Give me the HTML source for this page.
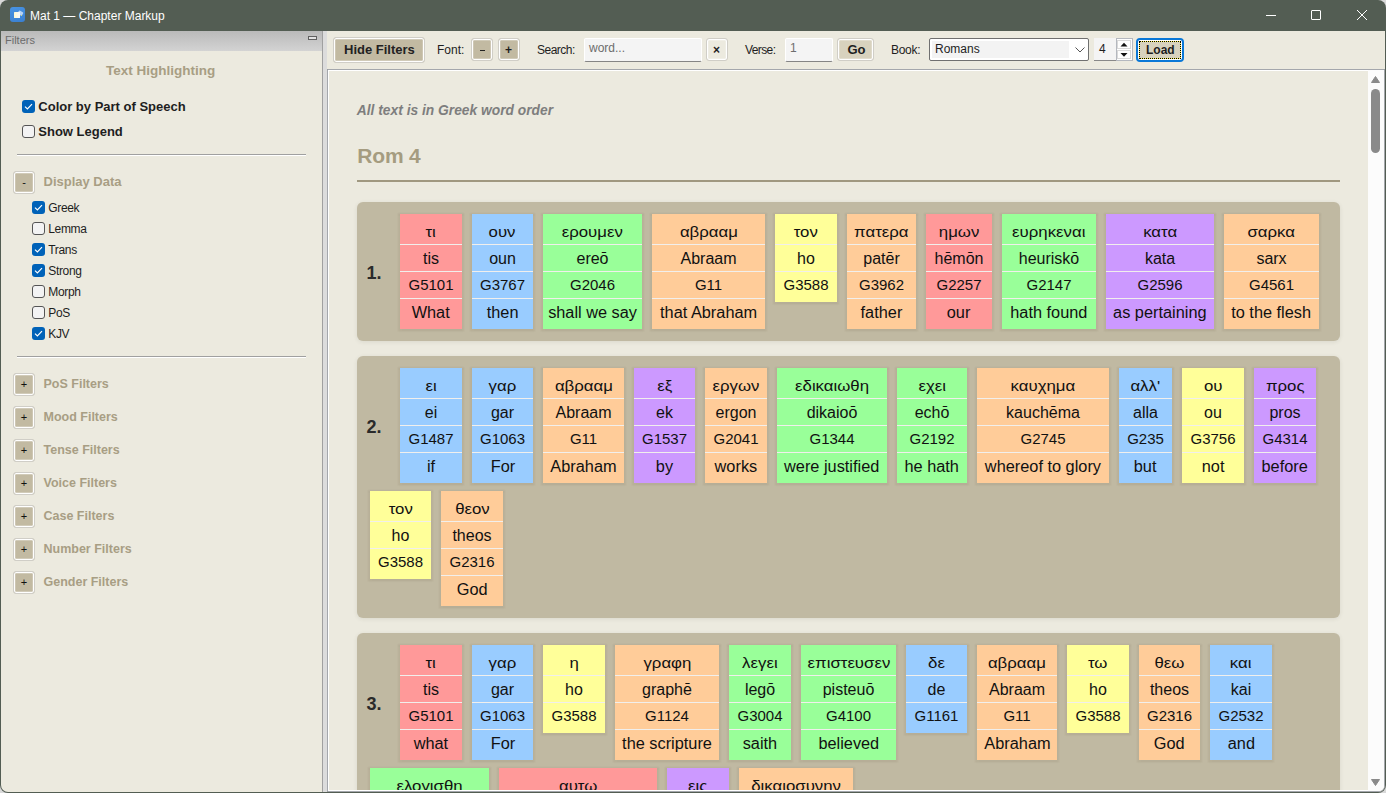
<!DOCTYPE html>
<html><head><meta charset="utf-8"><title>Mat 1 — Chapter Markup</title>
<style>
*{box-sizing:border-box;margin:0;padding:0}
html,body{width:1386px;height:793px;overflow:hidden;background:#d9d9d9;font-family:"Liberation Sans",sans-serif;color:#1e1e1e}
.abs{position:absolute}
#win{position:absolute;left:0;top:0;width:1386px;height:793px;background:#535d53;border-radius:8px 8px 8px 8px;overflow:hidden}
#title{position:absolute;left:30px;top:8px;font-size:12px;color:#fff;line-height:15px;white-space:nowrap}
#appicon{position:absolute;left:9.5px;top:7.3px;width:15.2px;height:15.2px;border-radius:3px;background:linear-gradient(160deg,#4893e4,#3a7fd0)}
#appicon i{position:absolute;left:4.3px;top:4.6px;width:6.2px;height:5.8px;background:linear-gradient(90deg,#fff8d0,#f4f8ff);border-radius:.5px}
#appicon b{position:absolute;left:8.5px;top:3.6px;width:4.5px;height:4px;background:rgba(225,238,255,.75);border-radius:1px;transform:rotate(30deg)}
#appicon u{position:absolute;left:11.3px;top:7.4px;width:1.6px;height:1.6px;background:#e8e060;border-radius:1px}
.wc{position:absolute;top:0;height:31px}
/* left panel */
#left{position:absolute;left:1px;top:31px;width:321px;height:761px;background:#eceadf;border-bottom-left-radius:7px;overflow:hidden}
#fhdr{position:absolute;left:0;top:0;width:321px;height:20px;background:linear-gradient(#bababa,#d3d3d3)}
#fhdr span{position:absolute;left:4px;top:3px;font-size:11px;color:#6c6c6c;line-height:13px}
#fmin{position:absolute;left:307px;top:5px;width:9px;height:4px;border:1px solid #606060;background:#e2e2e2}
#split{position:absolute;left:322px;top:31px;width:5px;height:761px;background:#dcdcdc;border-left:1px solid #a0a0a0}
.lbl{position:absolute;white-space:nowrap;line-height:15px}
.hd{font-weight:bold;color:#a89e84;font-size:13px}
.cb{position:absolute;width:13px;height:13px;border-radius:3px}
.cb.on{background:#0062b8}
.cb.off{background:#f3f3f3;border:1px solid #555}
.cb.on svg{position:absolute;left:2px;top:3px}
.sep{position:absolute;left:16px;width:290px;height:2px;border-top:1px solid #a0a0a0;border-bottom:1px solid #fff}
.tg{position:absolute;left:12px;width:22px;height:23px;border-radius:3px;background:#c2baa2;border:1px solid #d0cec7;box-shadow:inset 0 0 0 1.2px #fff}
.tg span{position:absolute;left:0;right:0;top:4px;text-align:center;font-size:11px;line-height:13px;color:#111}
/* toolbar */
#tool{position:absolute;left:327px;top:31px;width:1058px;height:38px;background:#eceadf}
.btn{position:absolute;border-radius:3px;border:1px solid #d0cec7;box-shadow:inset 0 0 0 1.2px #fff;background:#c2baa2}
.btn span{position:absolute;left:0;right:0;text-align:center;white-space:nowrap}
.inp{position:absolute;background:#f4f4f4;border:1px solid #fff;border-bottom:1px solid #858585;border-radius:2px}
/* content */
#content{position:absolute;left:327px;top:69px;width:1058px;height:723px;background:#eceadf;border:1px solid #a4a7ac;box-shadow:inset 1px 1px 0 #fff,inset -1px -1px 0 #fff;border-bottom-right-radius:6px}
#sb{position:absolute;left:1368px;top:70px;width:16px;height:721px;background:#fcfcfc;border-bottom-right-radius:5px}
.verse{position:absolute;left:357px;width:983px;background:#c0b9a2;border-radius:6px;box-shadow:0 1px 4px rgba(60,60,40,.10)}
.vnum{position:absolute;left:366.5px;font-weight:bold;font-size:18px;line-height:18px;margin-top:-9px;color:#2a2a2a}
.card{position:absolute;padding-top:4px;box-shadow:0 0.5px 1.5px 2px rgba(60,50,30,.08)}
.card .r{height:27px;border-top:1px solid #f1efec;text-align:center;font-size:15px;line-height:26px;white-space:nowrap;color:#111}
.card .r.f{height:26px;border-top:0}
.card .r span{display:inline-block}
.card .k0 span{transform:translateY(1px) scaleX(1.12)}
.card .k1 span{font-size:16px;transform:translateY(1px)}
.card .k3 span{font-size:16px;transform:translateY(1px) scaleX(1.02)}
</style></head>
<body>
<div id="win"></div>
<div id="appicon"><b></b><i></i><u></u></div>
<div class="lbl " style="left:30px;top:9.34px;font-size:12px;line-height:15px;color:#fff">Mat 1 — Chapter Markup</div>
<div class="abs" style="left:1266px;top:15px;width:10px;height:1px;background:#fff"></div>
<div class="abs" style="left:1311px;top:10px;width:10px;height:10px;border:1px solid #fff;border-radius:1px"></div>
<svg class="abs" style="left:1356px;top:9px" width="12" height="12" viewBox="0 0 12 12"><path d="M1 1 L11 11 M11 1 L1 11" stroke="#fff" stroke-width="1"/></svg>
<div id="left"><div id="fhdr"><span>Filters</span><div id="fmin"></div></div></div>
<div id="split"></div>
<div class="lbl hd" style="left:106px;top:62.42px;font-size:13.5px;line-height:17px;">Text Highlighting</div>
<div class="cb on" style="left:22px;top:100px"><svg width="9" height="7" viewBox="0 0 9 7"><path d="M1 3.6 L3.4 6 L8 1.2" fill="none" stroke="#fff" stroke-width="1.2"/></svg></div>
<div class="lbl " style="left:38.3px;top:98.80px;font-size:13px;line-height:16px;font-weight:bold;color:#1e1e1e">Color by Part of Speech</div>
<div class="cb off" style="left:22px;top:125px"></div>
<div class="lbl " style="left:38.3px;top:124.10px;font-size:13px;line-height:16px;font-weight:bold;color:#1e1e1e">Show Legend</div>
<div class="sep" style="top:154px;left:17px;width:289px"></div>
<div class="tg" style="top:171px;left:13px"><span>-</span></div>
<div class="lbl hd" style="left:43.5px;top:174.20px;font-size:13px;line-height:16px;">Display Data</div>
<div class="cb on" style="left:32px;top:201px"><svg width="9" height="7" viewBox="0 0 9 7"><path d="M1 3.6 L3.4 6 L8 1.2" fill="none" stroke="#fff" stroke-width="1.2"/></svg></div>
<div class="lbl " style="left:48.3px;top:201.34px;font-size:12px;line-height:15px;color:#1e1e1e;letter-spacing:-0.35px">Greek</div>
<div class="cb off" style="left:32px;top:222px"></div>
<div class="lbl " style="left:48.3px;top:222.34px;font-size:12px;line-height:15px;color:#1e1e1e;letter-spacing:-0.35px">Lemma</div>
<div class="cb on" style="left:32px;top:243px"><svg width="9" height="7" viewBox="0 0 9 7"><path d="M1 3.6 L3.4 6 L8 1.2" fill="none" stroke="#fff" stroke-width="1.2"/></svg></div>
<div class="lbl " style="left:48.3px;top:243.34px;font-size:12px;line-height:15px;color:#1e1e1e;letter-spacing:-0.35px">Trans</div>
<div class="cb on" style="left:32px;top:264px"><svg width="9" height="7" viewBox="0 0 9 7"><path d="M1 3.6 L3.4 6 L8 1.2" fill="none" stroke="#fff" stroke-width="1.2"/></svg></div>
<div class="lbl " style="left:48.3px;top:264.34px;font-size:12px;line-height:15px;color:#1e1e1e;letter-spacing:-0.35px">Strong</div>
<div class="cb off" style="left:32px;top:285px"></div>
<div class="lbl " style="left:48.3px;top:285.34px;font-size:12px;line-height:15px;color:#1e1e1e;letter-spacing:-0.35px">Morph</div>
<div class="cb off" style="left:32px;top:306px"></div>
<div class="lbl " style="left:48.3px;top:306.34px;font-size:12px;line-height:15px;color:#1e1e1e;letter-spacing:-0.35px">PoS</div>
<div class="cb on" style="left:32px;top:327px"><svg width="9" height="7" viewBox="0 0 9 7"><path d="M1 3.6 L3.4 6 L8 1.2" fill="none" stroke="#fff" stroke-width="1.2"/></svg></div>
<div class="lbl " style="left:48.3px;top:327.34px;font-size:12px;line-height:15px;color:#1e1e1e;letter-spacing:-0.35px">KJV</div>
<div class="sep" style="top:356px;left:17px;width:289px"></div>
<div class="tg" style="top:373px;left:13px"><span>+</span></div>
<div class="lbl hd" style="left:43.5px;top:376.27px;font-size:12.5px;line-height:16px;">PoS Filters</div>
<div class="tg" style="top:406px;left:13px"><span>+</span></div>
<div class="lbl hd" style="left:43.5px;top:409.27px;font-size:12.5px;line-height:16px;">Mood Filters</div>
<div class="tg" style="top:439px;left:13px"><span>+</span></div>
<div class="lbl hd" style="left:43.5px;top:442.27px;font-size:12.5px;line-height:16px;">Tense Filters</div>
<div class="tg" style="top:472px;left:13px"><span>+</span></div>
<div class="lbl hd" style="left:43.5px;top:475.27px;font-size:12.5px;line-height:16px;">Voice Filters</div>
<div class="tg" style="top:505px;left:13px"><span>+</span></div>
<div class="lbl hd" style="left:43.5px;top:508.27px;font-size:12.5px;line-height:16px;">Case Filters</div>
<div class="tg" style="top:538px;left:13px"><span>+</span></div>
<div class="lbl hd" style="left:43.5px;top:541.27px;font-size:12.5px;line-height:16px;">Number Filters</div>
<div class="tg" style="top:571px;left:13px"><span>+</span></div>
<div class="lbl hd" style="left:43.5px;top:574.27px;font-size:12.5px;line-height:16px;">Gender Filters</div>
<div id="tool"></div>
<div class="btn" style="left:333px;top:37px;width:92px;height:26px"></div>
<div class="lbl " style="left:344px;top:42.00px;font-size:13px;line-height:16px;font-weight:bold;color:#222">Hide Filters</div>
<div class="lbl " style="left:437px;top:42.74px;font-size:12px;line-height:15px;">Font:</div>
<div class="btn" style="left:471px;top:38px;width:22px;height:23px"></div>
<div class="abs" style="left:479.5px;top:50px;width:5px;height:1.1px;background:#222"></div>
<div class="btn" style="left:498px;top:38px;width:22px;height:23px"></div>
<div class="lbl " style="left:505px;top:42.64px;font-size:12px;line-height:15px;font-weight:bold">+</div>
<div class="lbl " style="left:537px;top:42.74px;font-size:12px;line-height:15px;letter-spacing:-0.5px">Search:</div>
<div class="inp" style="left:584px;top:38px;width:118px;height:24px"></div>
<div class="lbl " style="left:589px;top:41.14px;font-size:12px;line-height:15px;color:#6d6d6d">word...</div>
<div class="btn" style="left:706px;top:38px;width:22px;height:23px;background:#eceadf"></div>
<div class="lbl " style="left:713px;top:42.64px;font-size:12px;line-height:15px;font-weight:bold">×</div>
<div class="lbl " style="left:745px;top:42.84px;font-size:12px;line-height:15px;letter-spacing:-0.6px">Verse:</div>
<div class="inp" style="left:785px;top:38px;width:48px;height:24px"></div>
<div class="lbl " style="left:790px;top:40.84px;font-size:12px;line-height:15px;color:#6d6d6d">1</div>
<div class="btn" style="left:837px;top:38px;width:37px;height:23px;background:#d8d2be"></div>
<div class="lbl " style="left:847.5px;top:42.00px;font-size:13px;line-height:16px;font-weight:bold">Go</div>
<div class="lbl " style="left:891px;top:42.74px;font-size:12px;line-height:15px;letter-spacing:-0.3px">Book:</div>
<div class="abs" style="left:929px;top:38px;width:160px;height:23px;background:#fff;border:1px solid #707070;border-radius:2px"></div>
<div class="abs" style="left:932px;top:41px;width:137px;height:17px;background:#f3f3f3"></div>
<div class="lbl " style="left:935px;top:41.94px;font-size:12px;line-height:15px;">Romans</div>
<svg class="abs" style="left:1075px;top:47px" width="10" height="6" viewBox="0 0 10 6"><path d="M0.5 0.5 L5 5 L9.5 0.5" fill="none" stroke="#555" stroke-width="1"/></svg>
<div class="abs" style="left:1094px;top:38px;width:39px;height:23px;background:#f4f4f4;border-bottom:1px solid #888"></div>
<div class="abs" style="left:1116px;top:38px;width:17px;height:23px;background:#fff;border:1px solid #b4b8bf"></div>
<div class="abs" style="left:1117px;top:40px;width:14px;height:9px;background:#fdfdfd;border:1px solid #d8d8d8"></div>
<div class="abs" style="left:1117px;top:50px;width:14px;height:9px;background:#fdfdfd;border:1px solid #d8d8d8"></div>
<svg class="abs" style="left:1120px;top:42px" width="8" height="16" viewBox="0 0 8 16"><path d="M0.5 4.5 L4 0.8 L7.5 4.5Z M0.5 11 L4 14.7 L7.5 11Z" fill="#111"/></svg>
<div class="lbl " style="left:1099px;top:42.04px;font-size:12px;line-height:15px;">4</div>
<div class="abs" style="left:1136px;top:38px;width:48px;height:24px;border:2px solid #0a78d7;border-radius:4px;background:#fff"></div>
<div class="abs" style="left:1139px;top:41px;width:42px;height:18px;background:#d8d2be"></div>
<div class="abs" style="left:1139px;top:41px;width:42px;height:18px;background:#fff35a;border:1px dotted #000;box-shadow:inset 0 0 0 20px #d8d2be"></div>
<div class="lbl " style="left:1146px;top:42.89px;font-size:12px;line-height:15px;font-weight:bold">Load</div>
<div id="content"></div>
<div id="sb"></div>
<svg class="abs" style="left:1371px;top:76px" width="9" height="7" viewBox="0 0 9 7"><path d="M4.5 0.5 L8.5 6.5 L0.5 6.5Z" fill="#8a8a8a" stroke="#8a8a8a" stroke-linejoin="round"/></svg>
<div class="abs" style="left:1371px;top:89px;width:9px;height:64px;border-radius:4.5px;background:#8a8a8a"></div>
<svg class="abs" style="left:1371px;top:779px" width="9" height="7" viewBox="0 0 9 7"><path d="M0.5 0.5 L8.5 0.5 L4.5 6.5Z" fill="#8a8a8a" stroke="#8a8a8a" stroke-linejoin="round"/></svg>
<div id="clip" style="position:absolute;left:328px;top:70px;width:1040px;height:720px;overflow:hidden">
<div style="position:absolute;left:-328px;top:-70px;width:1386px;height:900px">
<div class="lbl " style="left:356.8px;top:101.92px;font-size:13.8px;line-height:17px;font-weight:bold;font-style:italic;color:#7e7e7e">All text is in Greek word order</div>
<div class="lbl " style="left:357.3px;top:143.32px;font-size:21px;line-height:26px;font-weight:bold;color:#a59c80;letter-spacing:-0.2px">Rom 4</div>
<div class="abs" style="left:357px;top:180px;width:983px;height:2px;background:#a09880"></div>
<div class="verse" style="top:202px;height:139px"></div>
<div class="vnum" style="top:273px">1.</div>
<div class="card" style="left:400px;top:214px;width:62px;height:115px;background:#ff9999"><div class="r f k0"><span>τι</span></div><div class="r k1"><span>tis</span></div><div class="r k2"><span>G5101</span></div><div class="r k3"><span>What</span></div></div>
<div class="card" style="left:472px;top:214px;width:61px;height:115px;background:#99ccff"><div class="r f k0"><span>ουν</span></div><div class="r k1"><span>oun</span></div><div class="r k2"><span>G3767</span></div><div class="r k3"><span>then</span></div></div>
<div class="card" style="left:543px;top:214px;width:99px;height:115px;background:#99ff99"><div class="r f k0"><span>ερουμεν</span></div><div class="r k1"><span>ereō</span></div><div class="r k2"><span>G2046</span></div><div class="r k3"><span>shall we say</span></div></div>
<div class="card" style="left:652px;top:214px;width:113px;height:115px;background:#ffcc99"><div class="r f k0"><span>αβρααμ</span></div><div class="r k1"><span>Abraam</span></div><div class="r k2"><span>G11</span></div><div class="r k3"><span>that Abraham</span></div></div>
<div class="card" style="left:775px;top:214px;width:62px;height:88px;background:#ffff99"><div class="r f k0"><span>τον</span></div><div class="r k1"><span>ho</span></div><div class="r k2"><span>G3588</span></div></div>
<div class="card" style="left:847px;top:214px;width:69px;height:115px;background:#ffcc99"><div class="r f k0"><span>πατερα</span></div><div class="r k1"><span>patēr</span></div><div class="r k2"><span>G3962</span></div><div class="r k3"><span>father</span></div></div>
<div class="card" style="left:926px;top:214px;width:66px;height:115px;background:#ff9999"><div class="r f k0"><span>ημων</span></div><div class="r k1"><span>hēmōn</span></div><div class="r k2"><span>G2257</span></div><div class="r k3"><span>our</span></div></div>
<div class="card" style="left:1002px;top:214px;width:94px;height:115px;background:#99ff99"><div class="r f k0"><span>ευρηκεναι</span></div><div class="r k1"><span>heuriskō</span></div><div class="r k2"><span>G2147</span></div><div class="r k3"><span>hath found</span></div></div>
<div class="card" style="left:1106px;top:214px;width:108px;height:115px;background:#cc99ff"><div class="r f k0"><span>κατα</span></div><div class="r k1"><span>kata</span></div><div class="r k2"><span>G2596</span></div><div class="r k3"><span>as pertaining</span></div></div>
<div class="card" style="left:1224px;top:214px;width:95px;height:115px;background:#ffcc99"><div class="r f k0"><span>σαρκα</span></div><div class="r k1"><span>sarx</span></div><div class="r k2"><span>G4561</span></div><div class="r k3"><span>to the flesh</span></div></div>
<div class="verse" style="top:356px;height:262px"></div>
<div class="vnum" style="top:427px">2.</div>
<div class="card" style="left:400px;top:368px;width:62px;height:115px;background:#99ccff"><div class="r f k0"><span>ει</span></div><div class="r k1"><span>ei</span></div><div class="r k2"><span>G1487</span></div><div class="r k3"><span>if</span></div></div>
<div class="card" style="left:472px;top:368px;width:61px;height:115px;background:#99ccff"><div class="r f k0"><span>γαρ</span></div><div class="r k1"><span>gar</span></div><div class="r k2"><span>G1063</span></div><div class="r k3"><span>For</span></div></div>
<div class="card" style="left:543px;top:368px;width:81px;height:115px;background:#ffcc99"><div class="r f k0"><span>αβρααμ</span></div><div class="r k1"><span>Abraam</span></div><div class="r k2"><span>G11</span></div><div class="r k3"><span>Abraham</span></div></div>
<div class="card" style="left:634px;top:368px;width:61px;height:115px;background:#cc99ff"><div class="r f k0"><span>εξ</span></div><div class="r k1"><span>ek</span></div><div class="r k2"><span>G1537</span></div><div class="r k3"><span>by</span></div></div>
<div class="card" style="left:705px;top:368px;width:62px;height:115px;background:#ffcc99"><div class="r f k0"><span>εργων</span></div><div class="r k1"><span>ergon</span></div><div class="r k2"><span>G2041</span></div><div class="r k3"><span>works</span></div></div>
<div class="card" style="left:777px;top:368px;width:110px;height:115px;background:#99ff99"><div class="r f k0"><span>εδικαιωθη</span></div><div class="r k1"><span>dikaioō</span></div><div class="r k2"><span>G1344</span></div><div class="r k3"><span>were justified</span></div></div>
<div class="card" style="left:897px;top:368px;width:70px;height:115px;background:#99ff99"><div class="r f k0"><span>εχει</span></div><div class="r k1"><span>echō</span></div><div class="r k2"><span>G2192</span></div><div class="r k3"><span>he hath</span></div></div>
<div class="card" style="left:977px;top:368px;width:132px;height:115px;background:#ffcc99"><div class="r f k0"><span>καυχημα</span></div><div class="r k1"><span>kauchēma</span></div><div class="r k2"><span>G2745</span></div><div class="r k3"><span>whereof to glory</span></div></div>
<div class="card" style="left:1119px;top:368px;width:53px;height:115px;background:#99ccff"><div class="r f k0"><span>αλλ&#x27;</span></div><div class="r k1"><span>alla</span></div><div class="r k2"><span>G235</span></div><div class="r k3"><span>but</span></div></div>
<div class="card" style="left:1182px;top:368px;width:62px;height:115px;background:#ffff99"><div class="r f k0"><span>ου</span></div><div class="r k1"><span>ou</span></div><div class="r k2"><span>G3756</span></div><div class="r k3"><span>not</span></div></div>
<div class="card" style="left:1254px;top:368px;width:62px;height:115px;background:#cc99ff"><div class="r f k0"><span>προς</span></div><div class="r k1"><span>pros</span></div><div class="r k2"><span>G4314</span></div><div class="r k3"><span>before</span></div></div>
<div class="card" style="left:370px;top:491px;width:61px;height:88px;background:#ffff99"><div class="r f k0"><span>τον</span></div><div class="r k1"><span>ho</span></div><div class="r k2"><span>G3588</span></div></div>
<div class="card" style="left:441px;top:491px;width:62px;height:115px;background:#ffcc99"><div class="r f k0"><span>θεον</span></div><div class="r k1"><span>theos</span></div><div class="r k2"><span>G2316</span></div><div class="r k3"><span>God</span></div></div>
<div class="verse" style="top:633px;height:267px"></div>
<div class="vnum" style="top:704px">3.</div>
<div class="card" style="left:400px;top:645px;width:62px;height:115px;background:#ff9999"><div class="r f k0"><span>τι</span></div><div class="r k1"><span>tis</span></div><div class="r k2"><span>G5101</span></div><div class="r k3"><span>what</span></div></div>
<div class="card" style="left:472px;top:645px;width:61px;height:115px;background:#99ccff"><div class="r f k0"><span>γαρ</span></div><div class="r k1"><span>gar</span></div><div class="r k2"><span>G1063</span></div><div class="r k3"><span>For</span></div></div>
<div class="card" style="left:543px;top:645px;width:62px;height:88px;background:#ffff99"><div class="r f k0"><span>η</span></div><div class="r k1"><span>ho</span></div><div class="r k2"><span>G3588</span></div></div>
<div class="card" style="left:615px;top:645px;width:104px;height:115px;background:#ffcc99"><div class="r f k0"><span>γραφη</span></div><div class="r k1"><span>graphē</span></div><div class="r k2"><span>G1124</span></div><div class="r k3"><span>the scripture</span></div></div>
<div class="card" style="left:729px;top:645px;width:62px;height:115px;background:#99ff99"><div class="r f k0"><span>λεγει</span></div><div class="r k1"><span>legō</span></div><div class="r k2"><span>G3004</span></div><div class="r k3"><span>saith</span></div></div>
<div class="card" style="left:801px;top:645px;width:95px;height:115px;background:#99ff99"><div class="r f k0"><span>επιστευσεν</span></div><div class="r k1"><span>pisteuō</span></div><div class="r k2"><span>G4100</span></div><div class="r k3"><span>believed</span></div></div>
<div class="card" style="left:906px;top:645px;width:61px;height:88px;background:#99ccff"><div class="r f k0"><span>δε</span></div><div class="r k1"><span>de</span></div><div class="r k2"><span>G1161</span></div></div>
<div class="card" style="left:977px;top:645px;width:80px;height:115px;background:#ffcc99"><div class="r f k0"><span>αβρααμ</span></div><div class="r k1"><span>Abraam</span></div><div class="r k2"><span>G11</span></div><div class="r k3"><span>Abraham</span></div></div>
<div class="card" style="left:1067px;top:645px;width:62px;height:88px;background:#ffff99"><div class="r f k0"><span>τω</span></div><div class="r k1"><span>ho</span></div><div class="r k2"><span>G3588</span></div></div>
<div class="card" style="left:1139px;top:645px;width:61px;height:115px;background:#ffcc99"><div class="r f k0"><span>θεω</span></div><div class="r k1"><span>theos</span></div><div class="r k2"><span>G2316</span></div><div class="r k3"><span>God</span></div></div>
<div class="card" style="left:1210px;top:645px;width:62px;height:115px;background:#99ccff"><div class="r f k0"><span>και</span></div><div class="r k1"><span>kai</span></div><div class="r k2"><span>G2532</span></div><div class="r k3"><span>and</span></div></div>
<div class="card" style="left:370px;top:768px;width:119px;height:115px;background:#99ff99"><div class="r f k0"><span>ελογισθη</span></div><div class="r k1"><span>logizomai</span></div><div class="r k2"><span>G3049</span></div><div class="r k3"><span>it was counted</span></div></div>
<div class="card" style="left:499px;top:768px;width:158px;height:115px;background:#ff9999"><div class="r f k0"><span>αυτω</span></div><div class="r k1"><span>autos</span></div><div class="r k2"><span>G846</span></div><div class="r k3"><span>unto him</span></div></div>
<div class="card" style="left:667px;top:768px;width:62px;height:115px;background:#cc99ff"><div class="r f k0"><span>εις</span></div><div class="r k1"><span>eis</span></div><div class="r k2"><span>G1519</span></div><div class="r k3"><span>for</span></div></div>
<div class="card" style="left:739px;top:768px;width:114px;height:115px;background:#ffcc99"><div class="r f k0"><span>δικαιοσυνην</span></div><div class="r k1"><span>dikaiosunē</span></div><div class="r k2"><span>G1343</span></div><div class="r k3"><span>righteousness</span></div></div>
</div></div>
</body></html>
